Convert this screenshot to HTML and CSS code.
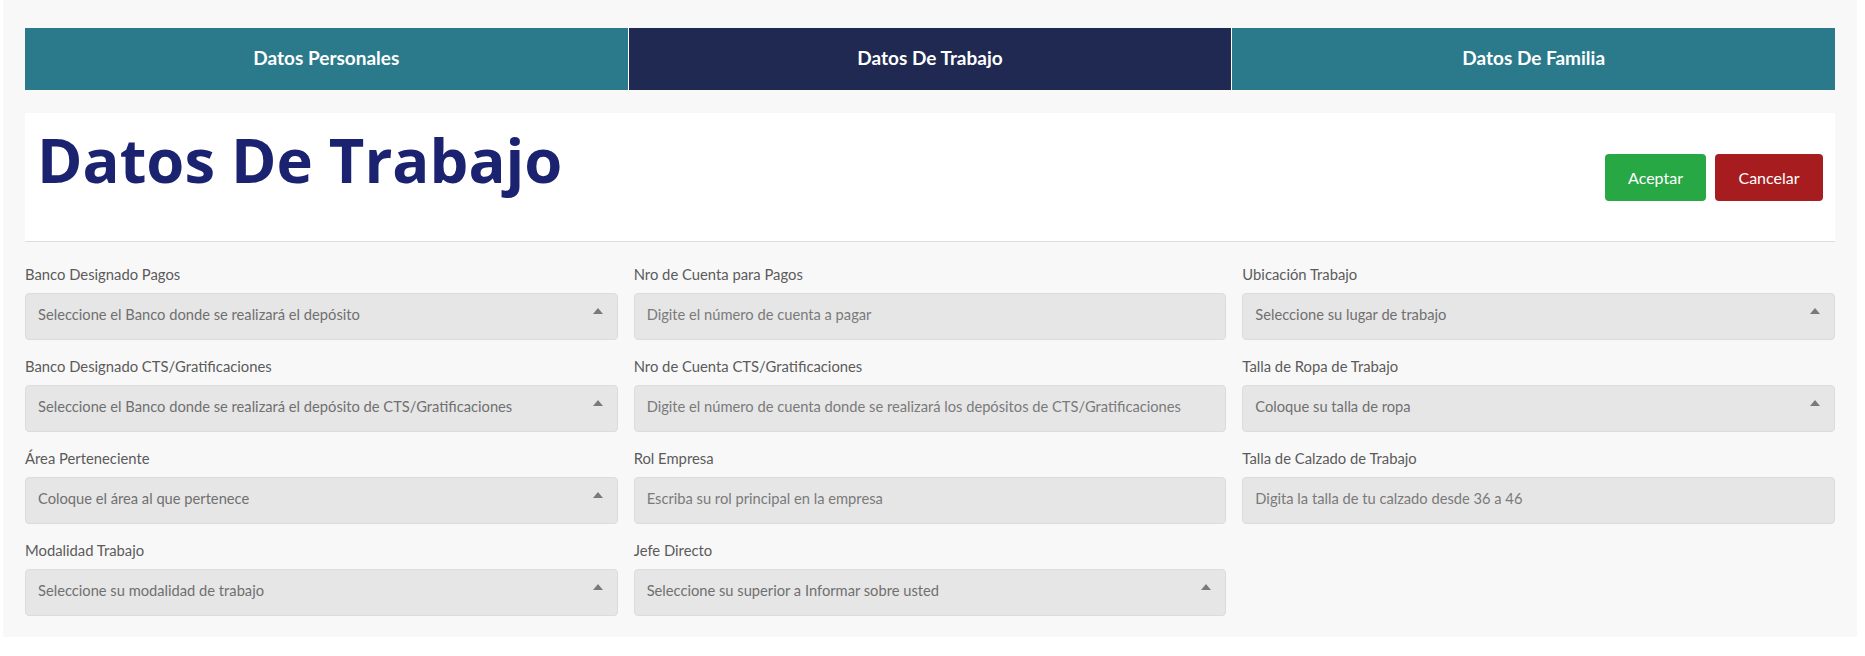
FILE: index.html
```html
<!DOCTYPE html>
<html lang="es">
<head>
<meta charset="utf-8">
<title>Datos De Trabajo</title>
<link rel="stylesheet" href="styles.css">
</head>
<body>
<div class="page">
  <nav class="tabs">
    <div class="tab">Datos Personales</div>
    <div class="tab tab-active">Datos De Trabajo</div>
    <div class="tab">Datos De Familia</div>
  </nav>

  <header class="card">
    <h1 class="title">Datos De Trabajo</h1>
    <div class="actions">
      <button class="btn btn-ok" type="button">Aceptar</button>
      <button class="btn btn-cancel" type="button">Cancelar</button>
    </div>
  </header>

  <form class="form">
    <div class="field">
      <label class="label">Banco Designado Pagos</label>
      <div class="control select"><span>Seleccione el Banco donde se realizará el depósito</span><svg class="caret" width="10" height="6" viewBox="0 0 10 6"><path d="M0 6 L5 0 L10 6 Z" fill="#7a7a7a"/></svg></div>
    </div>
    <div class="field">
      <label class="label">Nro de Cuenta para Pagos</label>
      <input class="control" type="text" placeholder="Digite el número de cuenta a pagar">
    </div>
    <div class="field">
      <label class="label">Ubicación Trabajo</label>
      <div class="control select"><span>Seleccione su lugar de trabajo</span><svg class="caret" width="10" height="6" viewBox="0 0 10 6"><path d="M0 6 L5 0 L10 6 Z" fill="#7a7a7a"/></svg></div>
    </div>

    <div class="field">
      <label class="label">Banco Designado CTS/Gratificaciones</label>
      <div class="control select"><span>Seleccione el Banco donde se realizará el depósito de CTS/Gratificaciones</span><svg class="caret" width="10" height="6" viewBox="0 0 10 6"><path d="M0 6 L5 0 L10 6 Z" fill="#7a7a7a"/></svg></div>
    </div>
    <div class="field">
      <label class="label">Nro de Cuenta CTS/Gratificaciones</label>
      <input class="control" type="text" placeholder="Digite el número de cuenta donde se realizará los depósitos de CTS/Gratificaciones">
    </div>
    <div class="field">
      <label class="label">Talla de Ropa de Trabajo</label>
      <div class="control select"><span>Coloque su talla de ropa</span><svg class="caret" width="10" height="6" viewBox="0 0 10 6"><path d="M0 6 L5 0 L10 6 Z" fill="#7a7a7a"/></svg></div>
    </div>

    <div class="field">
      <label class="label">Área Perteneciente</label>
      <div class="control select"><span>Coloque el área al que pertenece</span><svg class="caret" width="10" height="6" viewBox="0 0 10 6"><path d="M0 6 L5 0 L10 6 Z" fill="#7a7a7a"/></svg></div>
    </div>
    <div class="field">
      <label class="label">Rol Empresa</label>
      <input class="control" type="text" placeholder="Escriba su rol principal en la empresa">
    </div>
    <div class="field">
      <label class="label">Talla de Calzado de Trabajo</label>
      <input class="control" type="text" placeholder="Digita la talla de tu calzado desde 36 a 46">
    </div>

    <div class="field">
      <label class="label">Modalidad Trabajo</label>
      <div class="control select"><span>Seleccione su modalidad de trabajo</span><svg class="caret" width="10" height="6" viewBox="0 0 10 6"><path d="M0 6 L5 0 L10 6 Z" fill="#7a7a7a"/></svg></div>
    </div>
    <div class="field">
      <label class="label">Jefe Directo</label>
      <div class="control select"><span>Seleccione su superior a Informar sobre usted</span><svg class="caret" width="10" height="6" viewBox="0 0 10 6"><path d="M0 6 L5 0 L10 6 Z" fill="#7a7a7a"/></svg></div>
    </div>
  </form>
</div>
</body>
</html>
```

FILE: styles.css
```css
* { box-sizing: border-box; }

html, body {
  margin: 0;
  padding: 0;
  background: #ffffff;
}

body {
  font-family: Lato, "Open Sans", sans-serif;
}

.page {
  margin-left: 3px;
  width: 1854px;
  background: #f8f8f8;
  padding: 28px 22px 21px 22px;
}

.tabs {
  display: flex;
  height: 62px;
}

.tab {
  flex: 1;
  display: flex;
  align-items: center;
  justify-content: center;
  background: #2a7a8b;
  color: #ffffff;
  font-family: Lato, sans-serif;
  font-weight: 700;
  font-size: 19px;
  padding-bottom: 4px;
}

.tab + .tab {
  border-left: 1px solid #ffffff;
}

.tab-active {
  background: #1f2951;
}

.card {
  margin-top: 23px;
  height: 129px;
  background: #ffffff;
  border-bottom: 1px solid #dedede;
  display: flex;
  justify-content: space-between;
  align-items: center;
  padding: 0 12px 0 12px;
}

.title {
  align-self: flex-start;
  margin: 16px 0 0 0;
  font-family: "Open Sans", sans-serif;
  font-weight: 700;
  font-size: 61.5px;
  line-height: 1;
  color: #1b2370;
}

.actions {
  display: flex;
  gap: 9px;
}

.btn {
  height: 47px;
  border: none;
  border-radius: 4px;
  color: #ffffff;
  font-family: Lato, sans-serif;
  font-size: 16px;
  padding: 0;
}

.btn-ok {
  width: 101px;
  background: #28a745;
}

.btn-cancel {
  width: 108px;
  background: #a61c1f;
}

.form {
  margin-top: 24px;
  display: grid;
  grid-template-columns: repeat(3, 1fr);
  column-gap: 16px;
  row-gap: 18px;
}

.field {
  display: flex;
  flex-direction: column;
}

.label {
  height: 16px;
  line-height: 16px;
  font-size: 14.8px;
  color: #5b5b5b;
  margin-bottom: 11px;
}

.control {
  height: 47px;
  width: 100%;
  background: #e6e6e6;
  border: 1px solid #dcdcdc;
  border-radius: 4px;
  padding: 0 12px 5px 12px;
  font-family: Lato, sans-serif;
  font-size: 14.7px;
  color: #707070;
  outline: none;
}

.control::placeholder {
  color: #7a7a7a;
  opacity: 1;
}

.select {
  display: flex;
  align-items: center;
  justify-content: space-between;
  padding-right: 14px;
}

.caret {
  flex: none;
  margin-bottom: 6px;
}
```
